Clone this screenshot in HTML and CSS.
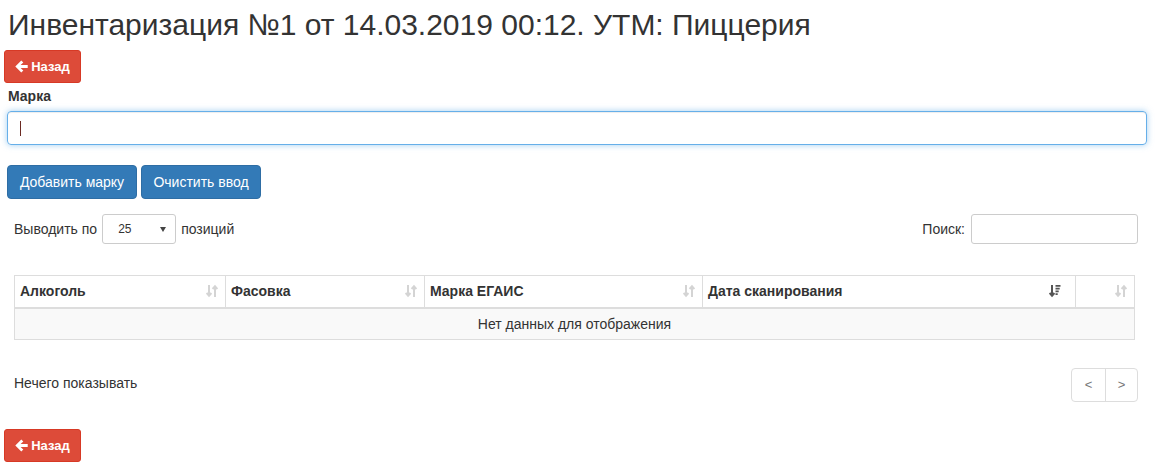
FILE: index.html
```html
<!DOCTYPE html>
<html lang="ru">
<head>
<meta charset="utf-8">
<title>Инвентаризация</title>
<link rel="stylesheet" href="styles.css">
</head>
<body>
<h1 class="title">Инвентаризация №1 от 14.03.2019 00:12. УТМ: Пиццерия</h1>

<a class="btn-back btn-back-top" href="#">
  <svg class="arrow-left" width="13" height="13" viewBox="0 0 13 13"><path d="M0.3 6.5 L6.3 0.5 L8.3 2.5 L5.6 5 H12.7 V8 H5.6 L8.3 10.5 L6.3 12.5 Z" fill="#fff"/></svg>
  <span>Назад</span>
</a>

<label class="field-label">Марка</label>
<div class="form-control focused"><span class="caret-line"></span></div>

<div class="actions">
  <button class="btn-primary">Добавить марку</button>
  <button class="btn-primary">Очистить ввод</button>
</div>

<div class="dt-controls">
  <div class="length">
    <span>Выводить по</span>
    <div class="select-sm"><span>25</span><span class="tri"></span></div>
    <span>позиций</span>
  </div>
  <div class="search">
    <span>Поиск:</span>
    <div class="search-input"></div>
  </div>
</div>

<table class="data">
  <thead>
    <tr>
      <th class="c1"><div class="th-in"><span>Алкоголь</span><svg class="sort" width="12" height="14" viewBox="0 0 12 14"><path d="M3 1 V11.5 M0.6 9 L3 11.8 L5.4 9" stroke="#d4d4d4" stroke-width="2" fill="none"/><path d="M9 13 V2.5 M6.6 5 L9 2.2 L11.4 5" stroke="#d4d4d4" stroke-width="2" fill="none"/></svg></div></th>
      <th class="c2"><div class="th-in"><span>Фасовка</span><svg class="sort" width="12" height="14" viewBox="0 0 12 14"><path d="M3 1 V11.5 M0.6 9 L3 11.8 L5.4 9" stroke="#d4d4d4" stroke-width="2" fill="none"/><path d="M9 13 V2.5 M6.6 5 L9 2.2 L11.4 5" stroke="#d4d4d4" stroke-width="2" fill="none"/></svg></div></th>
      <th class="c3"><div class="th-in"><span>Марка ЕГАИС</span><svg class="sort" width="12" height="14" viewBox="0 0 12 14"><path d="M3 1 V11.5 M0.6 9 L3 11.8 L5.4 9" stroke="#d4d4d4" stroke-width="2" fill="none"/><path d="M9 13 V2.5 M6.6 5 L9 2.2 L11.4 5" stroke="#d4d4d4" stroke-width="2" fill="none"/></svg></div></th>
      <th class="c4"><div class="th-in"><span>Дата сканирования</span><svg class="sort" width="12" height="14" viewBox="0 0 12 14"><path d="M3 1 V11.5 M0.6 9 L3 11.8 L5.4 9" stroke="#555" stroke-width="2" fill="none"/><path d="M6.5 1.8 H11.5 M6.5 4.6 H10.7 M6.5 7.4 H9.7 M6.5 10.2 H8.7" stroke="#555" stroke-width="1.7" fill="none"/></svg></div></th>
      <th class="c5"><div class="th-in"><span></span><svg class="sort" width="12" height="14" viewBox="0 0 12 14"><path d="M3 1 V11.5 M0.6 9 L3 11.8 L5.4 9" stroke="#d4d4d4" stroke-width="2" fill="none"/><path d="M9 13 V2.5 M6.6 5 L9 2.2 L11.4 5" stroke="#d4d4d4" stroke-width="2" fill="none"/></svg></div></th>
    </tr>
  </thead>
  <tbody>
    <tr><td colspan="5" class="empty">Нет данных для отображения</td></tr>
  </tbody>
</table>

<div class="dt-footer">
  <div class="info">Нечего показывать</div>
  <div class="pager">
    <span class="pg">&lt;</span>
    <span class="pg">&gt;</span>
  </div>
</div>

<a class="btn-back btn-back-bottom" href="#">
  <svg class="arrow-left" width="13" height="13" viewBox="0 0 13 13"><path d="M0.3 6.5 L6.3 0.5 L8.3 2.5 L5.6 5 H12.7 V8 H5.6 L8.3 10.5 L6.3 12.5 Z" fill="#fff"/></svg>
  <span>Назад</span>
</a>
</body>
</html>
```

FILE: styles.css
```css
* { box-sizing: border-box; }
html, body { margin: 0; padding: 0; background: #fff; }
body {
  font-family: "Liberation Sans", Arial, sans-serif;
  font-size: 14px;
  line-height: 20px;
  color: #333;
  width: 1155px;
}
.title {
  margin: 8px 0 0 8px;
  font-size: 30px;
  line-height: 33px;
  font-weight: normal;
  color: #333;
}
.btn-back {
  display: flex;
  width: 77px;
  height: 33px;
  align-items: center;
  justify-content: center;
  gap: 3px;
  margin-left: 4px;
  background: #dd4b39;
  border: 1px solid #d73925;
  border-radius: 3px;
  color: #fff;
  font-size: 13px;
  font-weight: bold;
  text-decoration: none;
}
.btn-back-top { margin-top: 9px; }
.btn-back-bottom { margin-top: 27px; }
.arrow-left { display: block; }
.field-label {
  display: block;
  margin: 3px 0 0 8px;
  font-weight: bold;
  font-size: 14px;
}
.form-control {
  margin: 5px 0 0 7px;
  width: 1140px;
  height: 34px;
  border: 1px solid #66afe9;
  border-radius: 4px;
  padding: 8px 12px;
  box-shadow: inset 0 1px 1px rgba(0,0,0,.075), 0 0 6px rgba(102,175,233,.6);
  display: flex;
  align-items: center;
}
.caret-line {
  display: block;
  width: 1px;
  height: 15px;
  background: #6b2a22;
}
.actions {
  display: flex;
  gap: 4px;
  margin: 20px 0 0 7px;
}
.btn-primary {
  height: 34px;
  padding: 0 11px;
  background: #337ab7;
  border: 1px solid #2e6da4;
  border-radius: 4px;
  color: #fff;
  font-family: "Liberation Sans", Arial, sans-serif;
  font-size: 14px;
}
.actions .btn-primary:first-child { width: 130px; }
.actions .btn-primary:last-child { width: 120px; }
.dt-controls {
  display: flex;
  justify-content: space-between;
  align-items: center;
  margin: 15px 0 0 14px;
  width: 1124px;
}
.length, .search {
  display: flex;
  align-items: center;
}
.length { gap: 5px; }
.search { gap: 6px; }
.select-sm {
  width: 74px;
  height: 30px;
  border: 1px solid #ccc;
  border-radius: 3px;
  display: flex;
  align-items: center;
  justify-content: space-between;
  padding: 0 9px 0 15px;
  font-size: 12px;
  color: #333;
}
.tri {
  width: 0;
  height: 0;
  border-left: 3px solid transparent;
  border-right: 3px solid transparent;
  border-top: 5px solid #444;
}
.search-input {
  width: 167px;
  height: 30px;
  border: 1px solid #ccc;
  border-radius: 3px;
}
.data {
  margin: 31px 0 0 14px;
  width: 1120px;
  border-collapse: collapse;
  table-layout: fixed;
}
.data th, .data td {
  border: 1px solid #ddd;
  padding: 5px 5px;
  line-height: 20px;
}
.data th {
  text-align: left;
  font-weight: bold;
  border-bottom: 2px solid #ddd;
  padding-bottom: 6px;
}
.c1 { width: 211px; }
.c2 { width: 199px; }
.c3 { width: 278px; }
.c4 { width: 373px; }
.c5 { width: 59px; }
.th-in {
  display: flex;
  justify-content: space-between;
  align-items: center;
}
.sort { display: block; margin-right: 2px; }
.c4 .sort { margin-right: 9px; }
.c5 .sort { margin-right: 2px; }
.data td.empty {
  background: #f9f9f9;
  text-align: center;
}
.dt-footer {
  display: flex;
  justify-content: space-between;
  align-items: flex-start;
  margin: 28px 0 0 14px;
  width: 1124px;
}
.info { margin-top: 5px; }
.pager {
  display: flex;
  border: 1px solid #ddd;
  border-radius: 4px;
  height: 34px;
}
.pg {
  width: 33px;
  height: 32px;
  display: flex;
  align-items: center;
  justify-content: center;
  color: #777;
  font-size: 13px;
}
.pg + .pg { border-left: 1px solid #ddd; width: 32px; }
```
